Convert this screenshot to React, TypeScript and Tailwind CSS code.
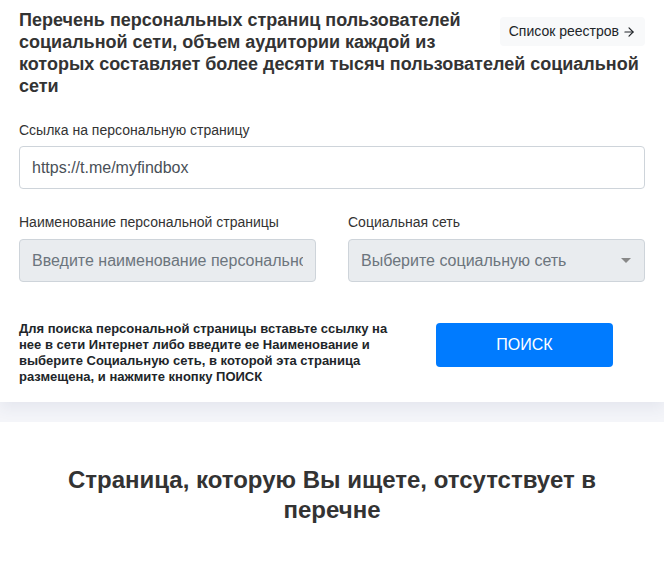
import { ArrowRight } from 'lucide-react';

export default function App() {
  return (
    <div className="min-h-screen bg-[#f4f5f9] font-['Liberation_Sans',Arial,sans-serif] text-[#333]">
      {/* Search card */}
      <div className="bg-white px-[19px] pt-[9px] pb-[17px] shadow-[0_6px_14px_rgba(50,60,110,0.08)]">
        <div className="flow-root">
          <a
            href="#"
            className="float-right mt-[8px] ml-4 flex items-center gap-[3px] rounded bg-[#f8f9fa] px-[9px] py-[6px] text-[14px] leading-[17px] text-[#212529]"
          >
            <span>Список реестров</span>
            <ArrowRight className="h-[14px] w-[14px] shrink-0" strokeWidth={2} />
          </a>
          <h1 className="text-[18px] font-bold leading-[22px]">
            Перечень персональных страниц пользователей социальной сети, объем аудитории каждой из которых
            составляет более десяти тысяч пользователей социальной сети
          </h1>
        </div>

        <label className="mt-[25px] block text-[14px] leading-[17px]">Ссылка на персональную страницу</label>
        <input
          type="text"
          defaultValue="https://t.me/myfindbox"
          className="mt-[7px] h-[43px] w-full rounded border border-[#ced4da] bg-white px-3 text-[16px] text-[#495057] outline-none"
        />

        <div className="mt-[25px] grid grid-cols-2 gap-8">
          <div>
            <label className="block text-[14px] leading-[17px]">Наименование персональной страницы</label>
            <input
              type="text"
              disabled
              placeholder="Введите наименование персональной страницы"
              className="mt-[8px] h-[43px] w-full rounded border border-[#ced4da] bg-[#e9ecef] px-3 text-[16px] text-[#495057] placeholder:text-[#6c757d] outline-none"
            />
          </div>
          <div>
            <label className="block text-[14px] leading-[17px]">Социальная сеть</label>
            <div className="mt-[8px] flex h-[43px] w-full items-center justify-between rounded border border-[#ced4da] bg-[#e9ecef] pl-3 pr-[12px] text-[16px] text-[#6c757d]">
              <span>Выберите социальную сеть</span>
              <svg width="10" height="6" viewBox="0 0 10 6" className="mr-[1px]">
                <path d="M0 0h10L5 5z" fill="#888" />
              </svg>
            </div>
          </div>
        </div>

        <div className="mt-[39px] flex items-start">
          <p className="w-[380px] text-[13px] font-bold leading-[16px] text-[#212529]">
            Для поиска персональной страницы вставьте ссылку на нее в сети Интернет либо введите ее Наименование и
            выберите Социальную сеть, в которой эта страница размещена, и нажмите кнопку ПОИСК
          </p>
          <button className="mt-[2px] ml-[37px] h-[44px] w-[177px] rounded bg-[#007bff] text-[16px] text-white">
            ПОИСК
          </button>
        </div>
      </div>

      {/* Result card */}
      <div className="mt-[20px] bg-white px-5 pt-[43px] pb-[60px]">
        <h2 className="mx-auto max-w-[560px] text-center text-[24px] font-bold leading-[30px] text-[#333]">
          Страница, которую Вы ищете, отсутствует в перечне
        </h2>
      </div>
    </div>
  );
}
